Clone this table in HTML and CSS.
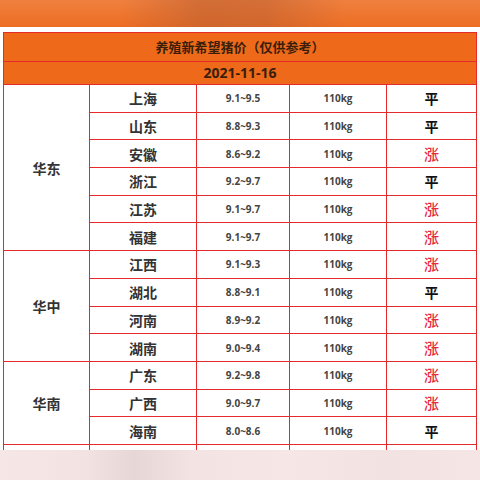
FILE: index.html
```html
<!DOCTYPE html>
<html lang="zh">
<head>
<meta charset="utf-8">
<link rel="stylesheet" href="styles.css">
</head>
<body>
<div class="band"></div>
<div class="wrap">
<table class="price">
  <colgroup>
    <col class="c1"><col class="c2"><col class="c3"><col class="c4"><col class="c5">
  </colgroup>
  <tr class="title"><td colspan="5">养殖新希望猪价（仅供参考）</td></tr>
  <tr class="date"><td colspan="5">2021-11-16</td></tr>
  <tr><td class="region" rowspan="6">华东</td><td class="prov">上海</td><td class="num">9.1~9.5</td><td class="num">110kg</td><td class="flat">平</td></tr>
  <tr><td class="prov">山东</td><td class="num">8.8~9.3</td><td class="num">110kg</td><td class="flat">平</td></tr>
  <tr><td class="prov">安徽</td><td class="num">8.6~9.2</td><td class="num">110kg</td><td class="up">涨</td></tr>
  <tr><td class="prov">浙江</td><td class="num">9.2~9.7</td><td class="num">110kg</td><td class="flat">平</td></tr>
  <tr><td class="prov">江苏</td><td class="num">9.1~9.7</td><td class="num">110kg</td><td class="up">涨</td></tr>
  <tr><td class="prov">福建</td><td class="num">9.1~9.7</td><td class="num">110kg</td><td class="up">涨</td></tr>
  <tr><td class="region" rowspan="4">华中</td><td class="prov">江西</td><td class="num">9.1~9.3</td><td class="num">110kg</td><td class="up">涨</td></tr>
  <tr><td class="prov">湖北</td><td class="num">8.8~9.1</td><td class="num">110kg</td><td class="flat">平</td></tr>
  <tr><td class="prov">河南</td><td class="num">8.9~9.2</td><td class="num">110kg</td><td class="up">涨</td></tr>
  <tr><td class="prov">湖南</td><td class="num">9.0~9.4</td><td class="num">110kg</td><td class="up">涨</td></tr>
  <tr><td class="region" rowspan="3">华南</td><td class="prov">广东</td><td class="num">9.2~9.8</td><td class="num">110kg</td><td class="up">涨</td></tr>
  <tr><td class="prov">广西</td><td class="num">9.0~9.7</td><td class="num">110kg</td><td class="up">涨</td></tr>
  <tr><td class="prov">海南</td><td class="num">8.0~8.6</td><td class="num">110kg</td><td class="flat">平</td></tr>
  <tr class="stub"><td></td><td></td><td></td><td></td><td></td></tr>
</table>
</div>
<div class="foot"></div>
</body>
</html>
```
FILE: styles.css
```css
html, body {
  margin: 0;
  padding: 0;
  width: 480px;
  height: 480px;
  overflow: hidden;
  background: #ffffff;
  font-family: "Noto Sans CJK SC", "Noto Sans", sans-serif;
}
.band {
  height: 27px;
  background:
    linear-gradient(to right, rgba(239,126,62,0) 0%, rgba(239,126,62,0) 25%, rgba(185,95,50,0.55) 42%, rgba(185,95,50,0.5) 55%, rgba(239,126,62,0) 72%, rgba(239,126,62,0) 100%),
    linear-gradient(to bottom, #f0803f 0%, #ec6d22 100%);
}
.wrap {
  padding: 5px 0 0 3px;
  height: 418px;
  overflow: hidden;
}
.price {
  border-collapse: collapse;
  table-layout: fixed;
  width: 474px;
}
.c1 { width: 86px; }
.c2 { width: 107px; }
.c3 { width: 93px; }
.c4 { width: 97px; }
.c5 { width: 90px; }
.price td {
  border: 1px solid #e42a2a;
  text-align: center;
  padding: 0;
  color: #333333;
  line-height: 18px;
}
.price tr { height: 27.7px; }
.price .title { height: 29px; }
.price .date { height: 23px; }
.title td, .date td {
  background: #ee6a1a;
  color: #3a1e0c;
  font-weight: bold;
}
.title td { font-size: 13px; }
.date td { font-size: 14px; font-family: "Open Sans", "Noto Sans", sans-serif; }
.region { font-size: 14px; font-weight: bold; color: #333; }
.prov { font-size: 14px; font-weight: bold; color: #333; }
.num {
  font-family: "Open Sans", "Noto Sans", sans-serif;
  font-size: 10px;
  font-weight: bold;
  color: #444 !important;
}
.flat { font-size: 14px; font-weight: bold; color: #111 !important; }
.up { font-size: 15px; font-weight: 500; color: #e8283c !important; }
.price .stub { height: 6px; }
.price .stub td { border-bottom: none; }
.foot {
  height: 35px;
  background: linear-gradient(to right, #f6e7e7 0%, #f3e2e2 18%, #e6d6d6 28%, #f4e3e3 40%, #f7e6e6 60%, #f3e2e2 80%, #f5e5e5 100%);
}
```
